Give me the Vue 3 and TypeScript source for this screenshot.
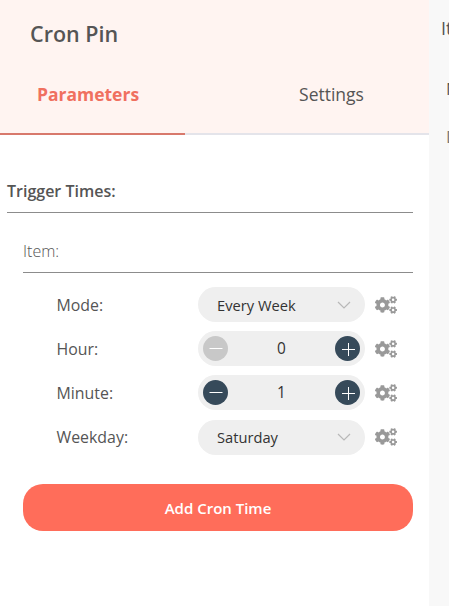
<script setup lang="ts">
import { ref } from 'vue'

type Field = {
  label: string
  kind: 'select' | 'number'
  value: string | number
}

const tabs = ['Parameters', 'Settings']
const activeTab = ref('Parameters')

const fields = ref<Field[]>([
  { label: 'Mode', kind: 'select', value: 'Every Week' },
  { label: 'Hour', kind: 'number', value: 0 },
  { label: 'Minute', kind: 'number', value: 1 },
  { label: 'Weekday', kind: 'select', value: 'Saturday' },
])

function step(field: Field, by: number) {
  field.value = Math.max(0, Number(field.value) + by)
}

const smallCog = 'M512.1 191l-8.2 14.3c-3 5.3-9.4 7.5-15.1 5.4-11.8-4.4-22.6-10.7-32.1-18.6-4.6-3.8-5.8-10.5-2.8-15.7l8.2-14.3c-6.9-8-12.3-17.3-15.9-27.4h-16.5c-6 0-11.2-4.3-12.2-10.3-2-12-2.1-24.6 0-37.1 1-6 6.2-10.4 12.2-10.4h16.5c3.6-10.1 9-19.4 15.9-27.4l-8.2-14.3c-3-5.2-1.9-11.9 2.8-15.7 9.5-7.9 20.4-14.2 32.1-18.6 5.7-2.1 12.1.1 15.1 5.4l8.2 14.3c10.5-1.9 21.2-1.9 31.7 0L552 6.3c3-5.3 9.4-7.5 15.1-5.4 11.8 4.4 22.6 10.7 32.1 18.6 4.6 3.8 5.8 10.5 2.8 15.7l-8.2 14.3c6.9 8 12.3 17.3 15.9 27.4h16.5c6 0 11.2 4.3 12.2 10.3 2 12 2.1 24.6 0 37.1-1 6-6.2 10.4-12.2 10.4h-16.5c-3.6 10.1-9 19.4-15.9 27.4l8.2 14.3c3 5.2 1.9 11.9-2.8 15.7-9.5 7.9-20.4 14.2-32.1 18.6-5.7 2.1-12.1-.1-15.1-5.4l-8.2-14.3c-10.4 1.9-21.2 1.9-31.7 0zm-10.5-58.8c38.5 29.6 82.4-14.3 52.8-52.8-38.5-29.7-82.4 14.3-52.8 52.8z'
const bigCog = 'M386.3 286.1l33.7 16.8c10.1 5.8 14.5 18.1 10.5 29.1-8.9 24.2-26.4 46.4-42.6 65.8-7.4 8.9-20.2 11.1-30.3 5.3l-29.1-16.8c-16 13.7-34.6 24.6-54.9 31.7v33.6c0 11.6-8.3 21.6-19.7 23.6-24.6 4.2-50.4 4.4-75.9 0-11.5-2-20-11.9-20-23.6V418c-20.3-7.2-38.9-18-54.9-31.7L74 403c-10 5.8-22.9 3.6-30.3-5.3-16.2-19.4-33.3-41.6-42.2-65.7-4-10.9.4-23.2 10.5-29.1l33.3-16.8c-3.9-20.9-3.9-42.4 0-63.4L12 205.8c-10.1-5.8-14.6-18.1-10.5-29 8.9-24.2 26-46.4 42.2-65.8 7.4-8.9 20.2-11.1 30.3-5.3l29.1 16.8c16-13.7 34.6-24.6 54.9-31.7V57.1c0-11.5 8.2-21.5 19.6-23.5 24.6-4.2 50.5-4.4 76-.1 11.5 2 20 11.9 20 23.6v33.6c20.3 7.2 38.9 18 54.9 31.7l29.1-16.8c10-5.8 22.9-3.6 30.3 5.3 16.2 19.4 33.2 41.6 42.1 65.8 4 10.9.1 23.2-10 29.1l-33.7 16.8c3.9 21 3.9 42.5 0 63.5zm-117.6 21.1c59.2-77-28.7-164.9-105.7-105.7-59.2 77 28.7 164.9 105.7 105.7z'
</script>

<template>
  <div class="layout">
    <section class="panel">
      <header class="header">
        <h1 class="title">Cron Pin</h1>
        <nav class="tabs">
          <button
            v-for="tab in tabs"
            :key="tab"
            class="tab"
            :class="{ active: tab === activeTab }"
            @click="activeTab = tab"
          >
            {{ tab }}
          </button>
        </nav>
      </header>

      <div class="body">
        <h2 class="group-title">Trigger Times:</h2>
        <div class="collection">
          <h3 class="item-title">Item:</h3>
          <div class="fields">
            <div v-for="field in fields" :key="field.label" class="field">
              <label class="label">{{ field.label }}:</label>
              <div v-if="field.kind === 'select'" class="pill select">
                <span>{{ field.value }}</span>
                <svg class="chevron" viewBox="0 0 14 8">
                  <path d="M1 1l6 6 6-6" />
                </svg>
              </div>
              <div v-else class="pill number">
                <button class="step" :disabled="field.value === 0" @click="step(field, -1)">
                  <svg viewBox="0 0 25 25"><path d="M6.5 12.5h13" /></svg>
                </button>
                <span>{{ field.value }}</span>
                <button class="step" @click="step(field, 1)">
                  <svg viewBox="0 0 25 25"><path d="M7 13.5h13M13.5 7v13" /></svg>
                </button>
              </div>
              <svg class="cogs" viewBox="0 0 640 512">
                <path :d="bigCog" />
                <path :d="smallCog" />
                <path :d="smallCog" transform="translate(0 299)" />
              </svg>
            </div>
          </div>
          <button class="add">Add Cron Time</button>
        </div>
      </div>
    </section>

    <!-- output pane, cut off by the window edge -->
    <aside class="output">
      <div class="output-title">Items</div>
      <div class="output-line">Name</div>
      <div class="output-line light">Data</div>
    </aside>
  </div>
</template>

<style>
body {
  margin: 0;
  overflow: hidden;
}
</style>

<style scoped>
.layout {
  display: flex;
  height: 606px;
  overflow: hidden;
  font-family: "Open Sans", "Noto Sans", sans-serif;
  font-size: 15.5px;
  color: #555555;
  background: #ffffff;
}

button {
  padding: 0;
  border: 0;
  font-family: inherit;
}

h1,
h2,
h3 {
  margin: 0;
}

.panel {
  flex: 0 0 429px;
}

.header {
  display: flex;
  flex-direction: column;
  box-sizing: border-box;
  height: 135px;
  background: #fff4f1;
}

.title {
  padding: 19px 30px 0;
  font-size: 21.5px;
  font-weight: 600;
  line-height: 30px;
}

.tabs {
  display: flex;
  margin-top: auto;
}

.tab {
  flex: 1;
  height: 80px;
  padding: 0 0 0 49px;
  border-bottom: 2px solid #e4e4ea;
  font-size: 17.5px;
  color: #555555;
  background: none;
}

.tab.active {
  flex: 0 0 185px;
  padding: 0 9px 0 0;
  border-bottom-color: #d8796c;
  font-weight: 700;
  color: #f0705f;
}

.body {
  padding: 43px 16px 0 7px;
}

.group-title {
  height: 34px;
  border-bottom: 1px solid #8c8c8c;
  font-size: 16px;
  font-weight: 600;
  line-height: 26px;
}

.collection {
  padding: 25px 0 0 16px;
}

.item-title {
  height: 34px;
  border-bottom: 1px solid #8c8c8c;
  font-size: 16px;
  font-weight: 300;
  line-height: 26px;
}

.fields {
  display: flex;
  flex-direction: column;
  gap: 9.2px;
  padding: 14px 0 29px 33.5px;
}

.field {
  display: flex;
  align-items: center;
  height: 35px;
}

.label {
  width: 141.5px;
  font-size: 15.9px;
}

.pill {
  display: flex;
  align-items: center;
  justify-content: space-between;
  box-sizing: border-box;
  width: 167px;
  height: 35px;
  border-radius: 18px;
  font-size: 14.7px;
  color: #333333;
  background: #efefef;
}

.select {
  padding: 0 14px 0 19px;
}

.number {
  padding: 0 5px;
  font-size: 15.4px;
}

.chevron {
  width: 14px;
  height: 8px;
  fill: none;
  stroke: #b8b8b8;
  stroke-width: 1.2;
}

.step {
  width: 25px;
  height: 25px;
  border-radius: 50%;
  background: #364a5a;
}

.step:disabled {
  background: #c8c8c8;
}

.step svg {
  display: block;
  fill: none;
  stroke: #ffffff;
}

.cogs {
  width: 22px;
  height: 18px;
  margin-left: 10px;
  fill: #999999;
}

.add {
  display: block;
  width: 100%;
  height: 47px;
  padding-top: 1px;
  border-radius: 20px;
  font-size: 15px;
  font-weight: 600;
  color: #ffffff;
  background: #ff6d5a;
}

.output {
  flex: 1;
  padding: 15px 0 0 12px;
  overflow: hidden;
  white-space: nowrap;
  background: #f8f8f8;
}

.output-title {
  height: 61px;
  font-size: 18px;
  line-height: 26px;
}

.output-line {
  height: 48px;
  padding-left: 5px;
  font-size: 17px;
  line-height: 26px;
}

.output-line.light {
  color: #777777;
}
</style>
